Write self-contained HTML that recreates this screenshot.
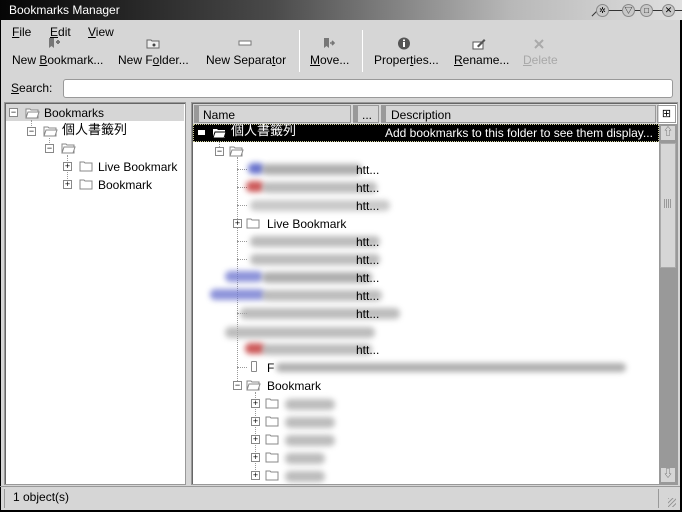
<!DOCTYPE html>
<html><head><meta charset="utf-8"><style>
*{margin:0;padding:0;box-sizing:border-box}
body{width:682px;height:512px;background:#d6d6d6;font-family:"Liberation Sans","Noto Sans CJK TC",sans-serif;font-size:12px;color:#000;position:relative;overflow:hidden}
.a{position:absolute;white-space:nowrap}
.t{position:absolute;white-space:nowrap;line-height:14px}
.ex{position:absolute;width:9px;height:9px;border:1px solid #888;background:#fff;font-size:9px;line-height:7px;text-align:center;color:#000}
.vl{position:absolute;border-left:1px dotted #999;width:0}
.hl{position:absolute;border-top:1px dotted #999;height:0}
.bl{position:absolute;height:11px;filter:blur(3px);border-radius:5px;opacity:.8}
u{text-decoration:underline}
.tb{position:absolute;top:51px;font-size:12px}
</style></head><body>
<div class="a" style="left:0;top:0;width:682px;height:20px;background:linear-gradient(90deg,#050505 0%,#4a4a4a 40%,#b8b8b8 75%,#e0e0e0 100%)"></div>
<div class="t" style="left:9px;top:3px;color:#fff;font-size:12px">Bookmarks Manager</div>
<div class="a" style="left:600px;top:10px;width:82px;border-top:1px solid #333"></div>
<div class="a" style="left:590px;top:11px;width:13px;border-top:1px solid #333;transform:rotate(-45deg)"></div>
<div class="a" style="left:596px;top:4px;width:13px;height:13px;border-radius:50%;background:#c8c8c8;border:1px solid #888;font-size:8px;text-align:center;line-height:11px">✲</div>
<div class="a" style="left:622px;top:4px;width:13px;height:13px;border-radius:50%;background:#c8c8c8;border:1px solid #888;font-size:8px;text-align:center;line-height:11px">▽</div>
<div class="a" style="left:640px;top:4px;width:13px;height:13px;border-radius:50%;background:#c8c8c8;border:1px solid #888;font-size:8px;text-align:center;line-height:11px">□</div>
<div class="a" style="left:662px;top:4px;width:13px;height:13px;border-radius:50%;background:#c8c8c8;border:1px solid #888;font-size:9px;text-align:center;line-height:11px">✕</div>
<div class="a" style="left:0;top:20px;width:1px;height:492px;background:#000"></div>
<div class="a" style="left:680px;top:20px;width:2px;height:492px;background:#000"></div>
<div class="a" style="left:0;top:510px;width:682px;height:2px;background:#000"></div>
<div class="t" style="left:12px;top:25px"><u>F</u>ile</div>
<div class="t" style="left:50px;top:25px"><u>E</u>dit</div>
<div class="t" style="left:88px;top:25px"><u>V</u>iew</div>
<svg class="a" style="left:47px;top:37px" width="14" height="12"><path d="M2 1h5v10l-2.5-2-2.5 2z" fill="#777"/><path d="M9 5h4M11 3v4" stroke="#777" stroke-width="2"/></svg>
<svg class="a" style="left:146px;top:38px" width="14" height="11"><path d="M1 2h4l1 1h7v7H1z" fill="#eee" stroke="#666"/><circle cx="8" cy="7" r="1.5" fill="#444"/></svg>
<svg class="a" style="left:238px;top:40px" width="14" height="6"><rect x="1" y="1" width="12" height="4" fill="#fff" stroke="#777"/></svg>
<svg class="a" style="left:322px;top:37px" width="14" height="12"><path d="M2 1h5v10l-2.5-2-2.5 2z" fill="#777"/><path d="M8 6h4M10 4l2 2-2 2" stroke="#777" stroke-width="1.6" fill="none"/></svg>
<svg class="a" style="left:397px;top:37px" width="14" height="13"><circle cx="7" cy="6.5" r="6" fill="#555"/><rect x="6" y="5" width="2" height="5" fill="#fff"/><rect x="6" y="2.5" width="2" height="1.6" fill="#fff"/></svg>
<svg class="a" style="left:472px;top:37px" width="14" height="13"><rect x="1" y="5" width="10" height="7" fill="#fff" stroke="#555"/><path d="M5 9l7-7 1.5 1.5-7 7z" fill="#555"/></svg>
<svg class="a" style="left:533px;top:38px" width="12" height="12"><path d="M2 2l8 8M10 2l-8 8" stroke="#aaa" stroke-width="2"/></svg>
<div class="tb t" style="left:12px;top:53px">New <u>B</u>ookmark...</div>
<div class="tb t" style="left:118px;top:53px">New F<u>o</u>lder...</div>
<div class="tb t" style="left:206px;top:53px">New Separa<u>t</u>or</div>
<div class="a" style="left:299px;top:30px;width:1px;height:42px;background:#999;border-right:1px solid #fff"></div>
<div class="tb t" style="left:310px;top:53px"><u>M</u>ove...</div>
<div class="a" style="left:362px;top:30px;width:1px;height:42px;background:#999;border-right:1px solid #fff"></div>
<div class="tb t" style="left:374px;top:53px">Proper<u>t</u>ies...</div>
<div class="tb t" style="left:454px;top:53px"><u>R</u>ename...</div>
<div class="tb t" style="left:523px;top:53px;color:#a8a8a8"><u>D</u>elete</div>
<div class="t" style="left:11px;top:81px"><u>S</u>earch:</div>
<div class="a" style="left:63px;top:79px;width:610px;height:19px;background:#fff;border:1px solid #999;border-radius:3px"></div>
<div class="a" style="left:4px;top:102px;width:182px;height:383px;background:#fff;border:1px solid #999;box-shadow:inset 1px 1px 0 #666"></div>
<div class="a" style="left:6px;top:104px;width:178px;height:17px;background:#d6d6d6"></div>
<div class="ex" style="left:9px;top:108px">−</div>
<svg class="a" style="left:25px;top:107px" width="15" height="12"><path d="M1 2h4l1 1h7v8H1z" fill="#fff" stroke="#888"/><path d="M3 5h11l-2 6H1z" fill="#fff" stroke="#888"/></svg>
<div class="t" style="left:44px;top:106px">Bookmarks</div>
<div class="vl" style="left:31px;top:120px;height:8px"></div>
<div class="ex" style="left:27px;top:127px">−</div>
<svg class="a" style="left:43px;top:125px" width="15" height="12"><path d="M1 2h4l1 1h7v8H1z" fill="#fff" stroke="#888"/><path d="M3 5h11l-2 6H1z" fill="#fff" stroke="#888"/></svg>
<div class="t" style="left:62px;top:123px;font-size:13px">個人書籤列</div>
<div class="vl" style="left:49px;top:138px;height:7px"></div>
<div class="ex" style="left:45px;top:144px">−</div>
<svg class="a" style="left:61px;top:142px" width="15" height="12"><path d="M1 2h4l1 1h7v8H1z" fill="#fff" stroke="#888"/><path d="M3 5h11l-2 6H1z" fill="#fff" stroke="#888"/></svg>
<div class="vl" style="left:67px;top:155px;height:30px"></div>
<div class="ex" style="left:63px;top:162px">+</div>
<svg class="a" style="left:79px;top:160px" width="15" height="12"><path d="M1 2h4l1 1h7v8H1z" fill="#fff" stroke="#888"/></svg>
<div class="t" style="left:98px;top:160px">Live Bookmark</div>
<div class="ex" style="left:63px;top:180px">+</div>
<svg class="a" style="left:79px;top:178px" width="15" height="12"><path d="M1 2h4l1 1h7v8H1z" fill="#fff" stroke="#888"/></svg>
<div class="t" style="left:98px;top:178px">Bookmark</div>
<div class="a" style="left:191px;top:102px;width:487px;height:383px;background:#fff;border:1px solid #999;box-shadow:inset 1px 1px 0 #666"></div>
<div class="a" style="left:193px;top:104px;width:466px;height:20px;background:#d6d6d6"></div>
<div class="a" style="left:194px;top:105px;width:157px;height:18px;border:1px solid #999;border-left:5px solid #999"></div>
<div class="t" style="left:203px;top:108px">Name</div>
<div class="a" style="left:353px;top:105px;width:26px;height:18px;border:1px solid #999;border-left:5px solid #999"></div>
<div class="t" style="left:362px;top:108px">...</div>
<div class="a" style="left:381px;top:105px;width:275px;height:18px;border:1px solid #999;border-left:5px solid #999"></div>
<div class="t" style="left:391px;top:108px">Description</div>
<div class="a" style="left:657px;top:105px;width:19px;height:18px;border:1px solid #999;font-size:11px;text-align:center;line-height:16px">⊞</div>
<div class="a" style="left:193px;top:124px;width:466px;height:18px;background:#000;border:1px dotted #cc9"></div>
<div class="a" style="left:198px;top:130px;width:7px;height:5px;background:#fff"></div>
<svg class="a" style="left:212px;top:127px" width="15" height="12"><path d="M1 2h4l1 1h7v8H1z" fill="#fff"/><path d="M3 5h11l-2 6H1z" fill="#fff" stroke="#000"/></svg>
<div class="t" style="left:231px;top:124px;color:#fff;font-size:13px">個人書籤列</div>
<div class="t" style="left:385px;top:126px;color:#fff">Add bookmarks to this folder to see them display...</div>
<div class="a" style="left:659px;top:124px;width:18px;height:360px;background:#999"></div>
<div class="a" style="left:660px;top:125px;width:16px;height:16px;background:#d6d6d6;border:1px solid #999;color:#666;font-size:10px;text-align:center;line-height:13px">⇧</div>
<div class="a" style="left:660px;top:143px;width:16px;height:125px;background:#d6d6d6;border:1px solid #aaa"></div>
<div class="a" style="left:664px;top:199px;width:8px;height:9px;background:repeating-linear-gradient(90deg,#999 0 1px,transparent 1px 2px)"></div>
<div class="a" style="left:660px;top:467px;width:16px;height:16px;background:#d6d6d6;border:1px solid #999;color:#666;font-size:10px;text-align:center;line-height:13px">⇩</div>
<div class="vl" style="left:219px;top:142px;height:5px"></div>
<div class="ex" style="left:215px;top:147px">−</div>
<svg class="a" style="left:229px;top:145px" width="15" height="12"><path d="M1 2h4l1 1h7v8H1z" fill="#fff" stroke="#888"/><path d="M3 5h11l-2 6H1z" fill="#fff" stroke="#888"/></svg>
<div class="vl" style="left:237px;top:157px;height:228px"></div>
<div class="hl" style="left:237px;top:169px;width:10px"></div>
<div class="hl" style="left:237px;top:187px;width:10px"></div>
<div class="hl" style="left:237px;top:205px;width:10px"></div>
<div class="hl" style="left:237px;top:241px;width:10px"></div>
<div class="hl" style="left:237px;top:259px;width:10px"></div>
<div class="hl" style="left:237px;top:313px;width:10px"></div>
<div class="hl" style="left:237px;top:367px;width:10px"></div>
<div class="ex" style="left:233px;top:219px">+</div>
<svg class="a" style="left:246px;top:217px" width="15" height="12"><path d="M1 2h4l1 1h7v8H1z" fill="#fff" stroke="#888"/></svg>
<div class="t" style="left:267px;top:217px">Live Bookmark</div>
<div class="ex" style="left:233px;top:381px">−</div>
<svg class="a" style="left:246px;top:379px" width="15" height="12"><path d="M1 2h4l1 1h7v8H1z" fill="#fff" stroke="#888"/><path d="M3 5h11l-2 6H1z" fill="#fff" stroke="#888"/></svg>
<div class="t" style="left:267px;top:379px">Bookmark</div>
<div class="vl" style="left:255px;top:392px;height:84px"></div>
<div class="ex" style="left:251px;top:399px">+</div>
<div class="ex" style="left:251px;top:417px">+</div>
<div class="ex" style="left:251px;top:435px">+</div>
<div class="ex" style="left:251px;top:453px">+</div>
<div class="ex" style="left:251px;top:471px">+</div>
<svg class="a" style="left:265px;top:397px" width="15" height="12"><path d="M1 2h4l1 1h7v8H1z" fill="#fff" stroke="#888"/></svg>
<svg class="a" style="left:265px;top:415px" width="15" height="12"><path d="M1 2h4l1 1h7v8H1z" fill="#fff" stroke="#888"/></svg>
<svg class="a" style="left:265px;top:433px" width="15" height="12"><path d="M1 2h4l1 1h7v8H1z" fill="#fff" stroke="#888"/></svg>
<svg class="a" style="left:265px;top:451px" width="15" height="12"><path d="M1 2h4l1 1h7v8H1z" fill="#fff" stroke="#888"/></svg>
<svg class="a" style="left:265px;top:469px" width="15" height="12"><path d="M1 2h4l1 1h7v8H1z" fill="#fff" stroke="#888"/></svg>
<div class="bl" style="left:248px;top:163px;width:16px;background:#4450c0"></div>
<div class="bl" style="left:262px;top:164px;width:100px;background:#999"></div>
<div class="t" style="left:356px;top:163px">htt...</div>
<div class="bl" style="left:246px;top:181px;width:18px;background:#c03030"></div>
<div class="bl" style="left:262px;top:182px;width:115px;background:#aaa"></div>
<div class="t" style="left:356px;top:181px">htt...</div>
<div class="bl" style="left:250px;top:200px;width:140px;background:#bbb"></div>
<div class="t" style="left:356px;top:199px">htt...</div>
<div class="bl" style="left:250px;top:236px;width:130px;background:#aaa"></div>
<div class="t" style="left:356px;top:235px">htt...</div>
<div class="bl" style="left:250px;top:254px;width:130px;background:#aaa"></div>
<div class="t" style="left:356px;top:253px">htt...</div>
<div class="bl" style="left:225px;top:271px;width:38px;background:#7078d0"></div>
<div class="bl" style="left:262px;top:272px;width:110px;background:#999"></div>
<div class="t" style="left:356px;top:271px">htt...</div>
<div class="bl" style="left:210px;top:289px;width:55px;background:#7078d0"></div>
<div class="bl" style="left:262px;top:290px;width:120px;background:#aaa"></div>
<div class="t" style="left:356px;top:289px">htt...</div>
<div class="bl" style="left:240px;top:308px;width:160px;background:#aaa"></div>
<div class="t" style="left:356px;top:307px">htt...</div>
<div class="bl" style="left:225px;top:327px;width:150px;background:#aaa"></div>
<div class="bl" style="left:245px;top:343px;width:20px;background:#c03030"></div>
<div class="bl" style="left:262px;top:344px;width:110px;background:#aaa"></div>
<div class="t" style="left:356px;top:343px">htt...</div>
<div class="a" style="left:251px;top:361px;width:6px;height:11px;border:1px solid #888;border-radius:1px"></div>
<div class="t" style="left:267px;top:361px">F</div>
<div class="bl" style="left:276px;top:363px;width:350px;height:9px;background:#999"></div>
<div class="bl" style="left:285px;top:399px;width:50px;background:#aaa"></div>
<div class="bl" style="left:285px;top:417px;width:50px;background:#aaa"></div>
<div class="bl" style="left:285px;top:435px;width:50px;background:#aaa"></div>
<div class="bl" style="left:285px;top:453px;width:40px;background:#aaa"></div>
<div class="bl" style="left:285px;top:471px;width:40px;background:#aaa"></div>
<div class="a" style="left:0;top:486px;width:680px;height:1px;background:#999"></div>
<div class="a" style="left:4px;top:489px;width:1px;height:19px;background:#fff;border-left:1px solid #999"></div>
<div class="t" style="left:13px;top:490px">1 object(s)</div>
<div class="a" style="left:658px;top:489px;width:1px;height:19px;background:#fff;border-left:1px solid #999"></div>
<div class="a" style="left:668px;top:498px;width:8px;height:9px;background:repeating-linear-gradient(135deg,#999 0 1px,transparent 1px 3px)"></div>
</body></html>
